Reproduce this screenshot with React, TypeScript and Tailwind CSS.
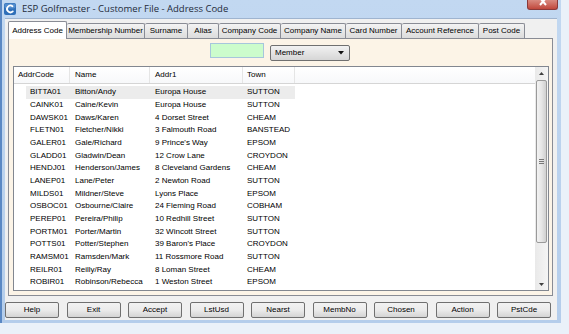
const rows = [
  ["BITTA01", "Bitton/Andy", "Europa House", "SUTTON"],
  ["CAINK01", "Caine/Kevin", "Europa House", "SUTTON"],
  ["DAWSK01", "Daws/Karen", "4 Dorset Street", "CHEAM"],
  ["FLETN01", "Fletcher/Nikki", "3 Falmouth Road", "BANSTEAD"],
  ["GALER01", "Gale/Richard", "9 Prince's Way", "EPSOM"],
  ["GLADD01", "Gladwin/Dean", "12 Crow Lane", "CROYDON"],
  ["HENDJ01", "Henderson/James", "8 Cleveland Gardens", "CHEAM"],
  ["LANEP01", "Lane/Peter", "2 Newton Road", "SUTTON"],
  ["MILDS01", "Mildner/Steve", "Lyons Place", "EPSOM"],
  ["OSBOC01", "Osbourne/Claire", "24 Fleming Road", "COBHAM"],
  ["PEREP01", "Pereira/Philip", "10 Redhill Street", "SUTTON"],
  ["PORTM01", "Porter/Martin", "32 Wincott Street", "SUTTON"],
  ["POTTS01", "Potter/Stephen", "39 Baron's Place", "CROYDON"],
  ["RAMSM01", "Ramsden/Mark", "11 Rossmore Road", "SUTTON"],
  ["REILR01", "Reilly/Ray", "8 Loman Street", "CHEAM"],
  ["ROBIR01", "Robinson/Rebecca", "1 Weston Street", "EPSOM"],
]

const tabs = [
  { label: "Address Code", w: "w-[59px]" },
  { label: "Membership Number", w: "w-[78px]" },
  { label: "Surname", w: "w-[43px]" },
  { label: "Alias", w: "w-[31px]" },
  { label: "Company Code", w: "w-[62px]" },
  { label: "Company Name", w: "w-[65px]" },
  { label: "Card Number", w: "w-[56px]" },
  { label: "Account Reference", w: "w-[77px]" },
  { label: "Post Code", w: "w-[46px]" },
]

const buttons = ["Help", "Exit", "Accept", "LstUsd", "Nearst", "MembNo", "Chosen", "Action", "PstCde"]

const App = () => {
  return (
    <div className="w-[569px] h-[334px] bg-[#eaf1f9] overflow-hidden text-[8px] text-black font-['Liberation_Sans',Arial,sans-serif]">
      <div className="w-[561px] h-[323px] flex flex-col bg-gradient-to-b from-[#c2d8f1] to-[#b4cdeb] border-l-[2px] border-[#5a88c4]">
        {/* title bar */}
        <div className="h-[18px] flex items-start relative">
          <svg className="mt-[3px] ml-[2px]" width="12" height="12" viewBox="0 0 12 12">
            <rect x="0" y="0" width="12" height="12" rx="2" fill="#2f6fb8" />
            <rect x="0.5" y="0.5" width="11" height="5" rx="2" fill="#6aa0dc" opacity="0.6" />
            <path d="M8.5 3.2 A3.4 3.4 0 1 0 8.8 8.4" stroke="#fff" strokeWidth="1.8" fill="none" strokeLinecap="round" />
          </svg>
          <span className="ml-[6px] mt-[3px] text-[9.5px] leading-[12px] text-[#1e2b3a] font-['Open_Sans',sans-serif]">
            ESP Golfmaster - Customer File - Address Code
          </span>
          <div className="absolute left-[525px] top-0 w-[31px] h-[10px] rounded-b-[3px] border border-t-0 border-[#8a3a3a] bg-gradient-to-b from-[#d98a80] to-[#c0473c] flex justify-center overflow-hidden">
            <svg width="10" height="10" viewBox="0 0 10 10" className="-mt-[3px]">
              <path d="M2 1 L8 8 M8 1 L2 8" stroke="#fff" strokeWidth="2" />
            </svg>
          </div>
        </div>

        {/* client */}
        <div className="ml-[3px] w-[552px] h-[302px] bg-[#f0f0f0] flex flex-col border-t border-[#9fb4cf]">
          {/* tab strip */}
          <div className="h-[19px] flex items-end pl-[3px] relative z-10">
            {tabs.map((t, i) =>
              i === 0 ? (
                <div key={t.label} className={`${t.w} h-[18px] -mb-[1px] bg-white border border-b-0 border-[#898c95] rounded-t-[2px] flex items-center justify-center`}>
                  {t.label}
                </div>
              ) : (
                <div key={t.label} className={`${t.w} h-[15px] bg-gradient-to-b from-[#f3f3f3] to-[#dcdcdc] border border-b-0 border-l-0 border-[#898c95] rounded-t-[2px] flex items-center justify-center whitespace-nowrap`}>
                  {t.label}
                </div>
              )
            )}
          </div>

          {/* panel */}
          <div className="ml-[3px] w-[545px] h-[258px] bg-[#fcf4e7] border border-[#898c95] pt-[4px] px-[4px] flex flex-col">
            <div className="h-[19px] flex items-start">
              <div className="ml-[197px] w-[54px] h-[15px] bg-[#ccfccc] border border-[#a7c6dc]" />
              <div className="ml-[6px] mt-[2px] w-[80px] h-[16px] rounded-[2px] border border-[#707070] bg-gradient-to-b from-[#f2f2f2] to-[#d6d6d6] flex items-center pl-[4px] pr-[5px]">
                <span className="flex-1">Member</span>
                <svg width="6" height="4" viewBox="0 0 6 4">
                  <path d="M0 0 H6 L3 3.5 Z" fill="#111" />
                </svg>
              </div>
            </div>

            {/* list view */}
            <div className="mt-[4px] w-[536px] h-[225px] bg-white border border-[#828790] flex">
              <div className="flex-1 flex flex-col">
                <div className="h-[17px] flex bg-gradient-to-b from-white to-[#f7f8fa] border-b border-[#d5d5d5]">
                  <div className="w-[56px] pl-[4px] flex items-center border-r border-[#e5e5e5]">AddrCode</div>
                  <div className="w-[80px] pl-[5px] flex items-center border-r border-[#e5e5e5]">Name</div>
                  <div className="w-[93px] pl-[5px] flex items-center border-r border-[#e5e5e5]">Addr1</div>
                  <div className="w-[52px] pl-[4px] flex items-center border-r border-[#e5e5e5]">Town</div>
                  <div className="flex-1" />
                </div>
                <div className="mt-[2px] flex flex-col">
                  {rows.map((r, i) => (
                    <div key={r[0]} className="h-[12.67px] flex items-center pl-[12px]">
                      <div className={`flex h-full items-center ${i === 0 ? "bg-[#ececec]" : ""}`}>
                        <div className="w-[44px] pl-[4px] whitespace-nowrap">{r[0]}</div>
                        <div className="w-[80px] pl-[5px] whitespace-nowrap">{r[1]}</div>
                        <div className="w-[93px] pl-[5px] whitespace-nowrap">{r[2]}</div>
                        <div className="w-[52px] pl-[4px] whitespace-nowrap">{r[3]}</div>
                      </div>
                    </div>
                  ))}
                </div>
              </div>

              {/* scrollbar */}
              <div className="w-[13px] h-full bg-gradient-to-r from-[#e9e9e9] to-[#f5f5f5] flex flex-col items-center">
                <div className="h-[13px] w-full flex items-center justify-center">
                  <svg width="5" height="3" viewBox="0 0 5 3"><path d="M0 3 L2.5 0 L5 3 Z" fill="#404040" /></svg>
                </div>
                <div className="w-[11px] h-[163px] rounded-[2px] border border-[#9a9a9a] bg-gradient-to-r from-[#f3f3f3] via-[#e6e6e6] to-[#d0d0d0] flex items-center justify-center">
                  <div className="flex flex-col gap-[1px]">
                    <div className="w-[5px] h-[1px] bg-[#777]" />
                    <div className="w-[5px] h-[1px] bg-[#777]" />
                    <div className="w-[5px] h-[1px] bg-[#777]" />
                  </div>
                </div>
                <div className="flex-1" />
                <div className="h-[12px] w-full flex items-center justify-center">
                  <svg width="5" height="3" viewBox="0 0 5 3"><path d="M0 0 L5 0 L2.5 3 Z" fill="#404040" /></svg>
                </div>
              </div>
            </div>
          </div>

          {/* buttons */}
          <div className="mt-[6px] flex gap-[7.5px]">
            {buttons.map((b) => (
              <div key={b} className="w-[54px] h-[16px] rounded-[2px] border border-[#707070] bg-gradient-to-b from-[#f2f2f2] via-[#ebebeb] to-[#d4d4d4] flex items-center justify-center">
                {b}
              </div>
            ))}
          </div>
        </div>
      </div>
    </div>
  )
}

export default App
